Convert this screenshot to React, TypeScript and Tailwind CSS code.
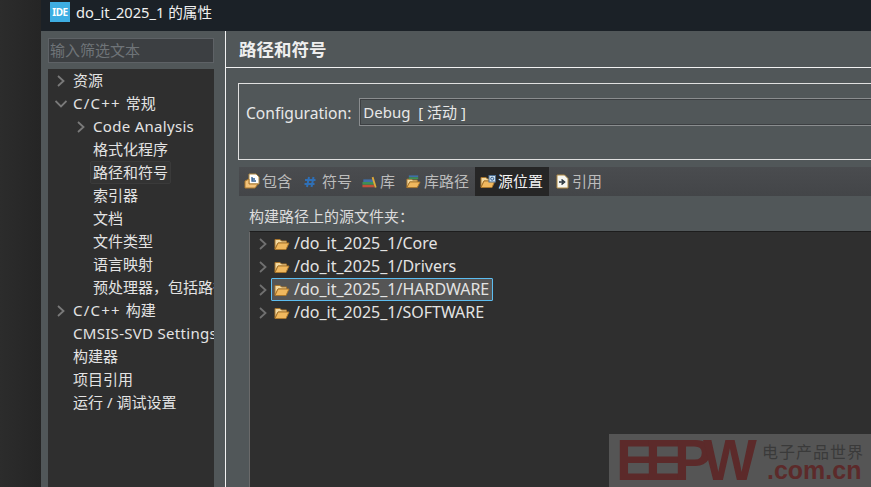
import React from 'react';

const uiFont = { fontFamily: '"Noto Sans", "Noto Sans CJK SC", sans-serif' };

const navItems = [
  { label: '资源', depth: 0, arrow: 'right' },
  { prefix: 'C/C++ ', label: '常规', depth: 0, arrow: 'down' },
  { prefix: 'Code Analysis', label: '', depth: 1, arrow: 'right' },
  { label: '格式化程序', depth: 1 },
  { label: '路径和符号', depth: 1, active: true },
  { label: '索引器', depth: 1 },
  { label: '文档', depth: 1 },
  { label: '文件类型', depth: 1 },
  { label: '语言映射', depth: 1 },
  { label: '预处理器，包括路径和符号', depth: 1 },
  { prefix: 'C/C++ ', label: '构建', depth: 0, arrow: 'right' },
  { prefix: 'CMSIS-SVD Settings', label: '', depth: 0 },
  { label: '构建器', depth: 0 },
  { label: '项目引用', depth: 0 },
  { label: '运行 / 调试设置', depth: 0 },
];

const folders = [
  { path: '/do_it_2025_1/Core' },
  { path: '/do_it_2025_1/Drivers' },
  { path: '/do_it_2025_1/HARDWARE', selected: true },
  { path: '/do_it_2025_1/SOFTWARE' },
];

const Chevron = ({ down = false, small = false }: { down?: boolean; small?: boolean }) => (
  <svg width="12" height="12" viewBox="0 0 12 12" fill="none" stroke={small ? '#707070' : '#7a7a7a'} strokeWidth="1.8">
    {down ? <path d="M0.5 3 L6 8.5 L11.5 3" /> : <path d="M3 1 L8.5 6 L3 11" />}
  </svg>
);

const OpenFolder = () => (
  <svg width="16" height="14" viewBox="0 0 16 14">
    <path d="M1 2.5 H6 L7.5 4 H12.5 V6 H4 L1 12 Z" fill="#f3d9a0" stroke="#a9762c" />
    <path d="M1 12.5 L4 6 H15 L12 12.5 Z" fill="#f0b85e" stroke="#a9762c" />
  </svg>
);

const IncludeIcon = () => (
  <svg width="16" height="17" viewBox="0 0 16 17">
    <path d="M5 1 H12 L15 4 V11 H5 Z" fill="#fff" stroke="#b08a45" />
    <path d="M8 4 V8 H12 M8 6 H11" fill="none" stroke="#2f5c8f" strokeWidth="1.3" />
    <path d="M1 8 L5 6 V11 H14 L11 15 H1 Z" fill="#f2c27a" stroke="#a9762c" />
  </svg>
);

const BooksIcon = () => (
  <svg width="15" height="14" viewBox="0 0 17 14">
    <rect x="0.5" y="10" width="13" height="3" fill="#c2503a" />
    <rect x="0.5" y="7" width="13" height="3" fill="#3f8f55" />
    <rect x="1.5" y="4" width="11" height="3" fill="#3f6fa8" />
    <path d="M11 2 L13 1 L16.5 13 L14.5 13.5 Z" fill="#e0a93a" />
  </svg>
);

const FolderBooksIcon = () => (
  <svg width="15" height="15" viewBox="0 0 16 15">
    <path d="M1 5 H6 L7 6 H12 V8 H4 L1 14 Z" fill="#f3d9a0" stroke="#a9762c" />
    <path d="M1 14 L4 8 H15 L12 14 Z" fill="#f0b85e" stroke="#a9762c" />
    <rect x="3" y="1" width="10" height="2" fill="#3f6fa8" />
    <rect x="3" y="3" width="10" height="2" fill="#3f8f55" />
  </svg>
);

const SourceIcon = () => (
  <svg width="16" height="14" viewBox="0 0 16 14">
    <path d="M1 2.5 H6 L7.5 4 H12 V6 H4 L1 12 Z" fill="#f3d9a0" stroke="#a9762c" />
    <path d="M1 12.5 L4 6 H15 L12 12.5 Z" fill="#f0b85e" stroke="#a9762c" />
    <rect x="9" y="0.5" width="6.5" height="6.5" fill="#cfe0ee" stroke="#4d6f92" />
    <circle cx="12.2" cy="3.7" r="1.5" fill="none" stroke="#2f5c8f" />
  </svg>
);

const RefIcon = () => (
  <svg width="13" height="15" viewBox="0 0 13 15">
    <path d="M1 1 H8.5 L12 4.5 V14 H1 Z" fill="#f6f6f0" stroke="#b08a45" />
    <path d="M3 8 H7 M5.5 5.5 L8.5 8 L5.5 10.5" fill="none" stroke="#26323c" strokeWidth="1.6" />
  </svg>
);

const HashIcon = () => (
  <svg width="12" height="12" viewBox="0 0 12 12" fill="none" stroke="#2f6fb5" strokeWidth="2">
    <path d="M5 1 L3 11 M9.5 1 L7.5 11 M1 4 H11.5 M0.5 8 H10.5" />
  </svg>
);

const tabs = [
  { label: '包含', icon: <IncludeIcon />, cls: 'w-[60px] gap-[2px] pl-[5px]' },
  { label: '符号', icon: <HashIcon />, cls: 'w-[59px] gap-[6px] pl-[5px]' },
  { label: '库', icon: <BooksIcon />, cls: 'w-[43px] gap-[3px] pl-[4px]' },
  { label: '库路径', icon: <FolderBooksIcon />, cls: 'w-[74px] gap-[3px] pl-[5px]' },
  { label: '源位置', icon: <SourceIcon />, cls: 'w-[74px] gap-[2px] pl-[5px]', active: true },
  { label: '引用', icon: <RefIcon />, cls: 'w-[60px] gap-[3px] pl-[7px]' },
];

export default function App() {
  return (
    <div className="relative flex h-[487px] w-[871px] overflow-hidden bg-[#292929] text-[15px] leading-[23px]" style={uiFont}>
      {/* desktop strip on the left of the dialog */}
      <div className="w-[41px] shrink-0 bg-gradient-to-r from-[#2c2c2c] to-[#252525]" />

      <div className="flex min-w-0 flex-1 flex-col bg-[#515759]">
        {/* title bar */}
        <div className="flex h-[31px] shrink-0 items-start gap-[6px] bg-[#1b2127] pl-[9px] pt-[2px] text-[14.67px] leading-[20px] text-[#f0f0f0]">
          <div className="flex h-[20px] w-[20px] items-center justify-center bg-[#3eaee3] text-[10px] font-bold tracking-[-0.5px] text-white">IDE</div>
          <span>do_it_2025_1 的属性</span>
        </div>

        <div className="flex min-h-0 flex-1">
          {/* left nav */}
          <div className="flex w-[184px] shrink-0 flex-col pl-[7px] pr-[11px] pt-[7px]">
            <div className="flex h-[25px] shrink-0 items-center border border-[#5e6266] bg-[#3c3f42] pl-[1px] text-[#6f7478]">输入筛选文本</div>
            <div className="mt-[6px] flex-1 overflow-hidden bg-[#2f2f2f] text-[#e3e3e3]">
              {navItems.map((item, i) => (
                <div key={i} className="flex h-[23px] items-center whitespace-nowrap">
                  <div className={item.depth === 1 ? 'flex w-[45px] shrink-0 justify-end pr-[6px]' : 'flex w-[25px] shrink-0 justify-end pr-[6px]'}>
                    {item.arrow && <Chevron down={item.arrow === 'down'} />}
                  </div>
                  <span className={item.active ? '-ml-[3px] rounded-[2px] border border-[#3a3a3a] bg-[#333] px-[2px] leading-[21px]' : ''}>
                    {item.prefix && (
                      <span className={item.label ? 'whitespace-pre tracking-[1.2px]' : 'tracking-[0.3px]'}>{item.prefix}</span>
                    )}
                    {item.label}
                  </span>
                </div>
              ))}
            </div>
          </div>

          {/* right page */}
          <div className="flex min-w-0 flex-1 flex-col border-l border-[#f2f2f2]">
            <div className="flex h-[37px] shrink-0 items-center border-b border-[#f2f2f2] pl-[13px] text-[17.5px] font-bold text-[#eeeeee]">路径和符号</div>

            <div className="flex min-h-0 flex-1 flex-col pl-[12px] pt-[15px]">
              <div className="flex h-[77px] shrink-0 items-start border-y border-l border-[#e0e0e0] pl-[7px] pt-[14px] text-[#e8e8e8]">
                <span className="mr-[8px] whitespace-nowrap text-[15.6px] leading-[30px]">Configuration:</span>
                <div className="-mr-[10px] flex h-[28px] flex-1 items-center border border-[#8a8d8f] pl-[3px] pt-[1px] shadow-[inset_0_0_0_1px_#3c3f42]">Debug&nbsp; [ 活动 ]</div>
              </div>

              <div className="mt-[7px] ml-[1px] flex h-[29px] shrink-0 bg-gradient-to-b from-[#4a4c4f] to-[#434548]">
                {tabs.map((tab) => (
                  <div
                    key={tab.label}
                    className={`flex shrink-0 items-center ${tab.cls} ${tab.active ? 'bg-[#262626] text-[#f4f4f4]' : 'text-[#bcbcbc]'}`}
                  >
                    {tab.icon}
                    <span className="whitespace-nowrap">{tab.label}</span>
                  </div>
                ))}
              </div>

              <div className="flex min-h-0 flex-1 flex-col pl-[11px]">
                <div className="flex h-[35px] shrink-0 items-center pt-[6px] text-[#dcdcdc]">构建路径上的源文件夹：</div>
                <div className="flex-1 border-l border-t border-l-[#6a6a6a] border-t-[#1d1d1d] bg-[#2f2f2f] text-[16px] text-[#e3e3e3]">
                  {folders.map((f) => (
                    <div key={f.path} className="flex h-[23px] items-center">
                      <div className="flex w-[21px] shrink-0 justify-end pr-[2px]">
                        <Chevron small />
                      </div>
                      <div className={`flex h-[23px] items-center gap-[4px] rounded-[1px] border pl-[2px] pr-[3px] ${f.selected ? 'border-[#5dbdf0] bg-[#555555]' : 'border-transparent'}`}>
                        <OpenFolder />
                        <span className="whitespace-nowrap">{f.path}</span>
                      </div>
                    </div>
                  ))}
                </div>
              </div>
            </div>
          </div>
        </div>
      </div>

      {/* watermark sits over the dialog */}
      <div className="absolute bottom-0 right-0 flex h-[53px] w-[262px] items-start bg-[#555555]" style={{ fontFamily: '"Liberation Sans", sans-serif' }}>
        <span className="ml-[7px] w-[146px] text-[57px] font-bold leading-[53px] tracking-[-9px] text-[#5c2a2a]">EEPW</span>
        <div className="flex flex-col pt-[8px]">
          <span className="whitespace-nowrap text-[16px] leading-[18px] tracking-[1px] text-[#3a3a3a]" style={{ fontFamily: '"Noto Sans CJK SC", sans-serif' }}>电子产品世界</span>
          <span className="ml-[5px] text-[25px] font-bold leading-[20px] text-[#5c2a2a]">.com.cn</span>
        </div>
      </div>
    </div>
  );
}
